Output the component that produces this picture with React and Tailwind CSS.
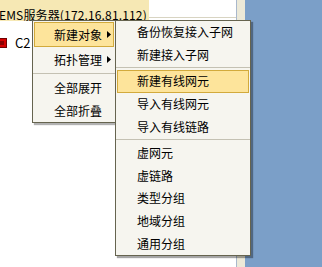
const subItems = [
  { label: '备份恢复接入子网' },
  { label: '新建接入子网' },
  { sep: true },
  { label: '新建有线网元', active: true },
  { label: '导入有线网元' },
  { label: '导入有线链路' },
  { sep: true },
  { label: '虚网元' },
  { label: '虚链路' },
  { label: '类型分组' },
  { label: '地域分组' },
  { label: '通用分组' },
];

const mainItems = [
  { label: '新建对象', arrow: true, active: true, h: 'h-[25px]' },
  { label: '拓扑管理', arrow: true, h: 'h-[25px]' },
  { sep: true },
  { label: '全部展开', h: 'h-[23px]' },
  { label: '全部折叠', h: 'h-[23px]' },
];

function Arrow() {
  return (
    <svg width="4" height="7" viewBox="0 0 4 7" className="shrink-0">
      <polygon points="0,0 4,3.5 0,7" fill="#000" />
    </svg>
  );
}

function MenuItem({ label, arrow, active, h }) {
  return (
    <div
      className={`mx-px flex items-center justify-between border pl-[19px] pr-[2px] ${h} ${
        active ? 'border-[#d2aa3c] bg-[#fde49b]' : 'border-transparent'
      }`}
    >
      <span className="leading-[14px]">{label}</span>
      {arrow && <Arrow />}
    </div>
  );
}

function Separator() {
  return (
    <div className="flex h-[4px] flex-col">
      <div className="mt-px h-px bg-[#c4c1b3]" />
    </div>
  );
}

export default function App() {
  return (
    <div className="relative flex h-[267px] w-[322px] overflow-hidden font-['Noto_Sans_CJK_SC','Noto_Sans',sans-serif] text-[12px] text-black">
      <div className="flex w-[237px] flex-col border-r border-[#a9b8cc] bg-white">
        <div className="flex h-[22px]">
          <div className="-ml-px flex h-[21px] items-end bg-[#f6e8b4] pr-[2px]">
            <span className="whitespace-nowrap leading-[13px] tracking-[0.15px]">EMS服务器(172.16.81.112)</span>
          </div>
          <div className="h-[18px] flex-1 border-b border-[#d8d4c2]" />
        </div>
        <div className="mt-[10px] flex h-[21px] items-center gap-[8px]">
          <div className="-ml-[4px] flex h-[10px] w-[11px] items-center justify-center border border-[#700000] bg-[#d40000]">
            <div className="h-[4px] w-[5px] bg-[#8a0000]" />
          </div>
          <span className="text-[13px] leading-[14px]">C2</span>
        </div>
      </div>
      <div className="w-[8px] bg-[#ece9d8]" />
      <div className="flex-1 bg-[#7b9fc8]" />

      <div className="absolute left-[32px] top-[20px] z-10 w-[84px] border border-[#66644f] bg-[#f6f5ef] pt-px shadow-[2px_2px_1px_rgba(0,0,0,0.3)]">
        {mainItems.map((item, i) =>
          item.sep ? <Separator key={i} /> : <MenuItem key={i} {...item} />
        )}
      </div>

      <div className="absolute left-[115px] top-[20px] z-20 w-[136px] border border-[#66644f] bg-[#f6f5ef] shadow-[2px_2px_1px_rgba(0,0,0,0.35)]">
        {subItems.map((item, i) =>
          item.sep ? <Separator key={i} /> : <MenuItem key={i} {...item} h="h-[22.6px]" />
        )}
      </div>
    </div>
  );
}
